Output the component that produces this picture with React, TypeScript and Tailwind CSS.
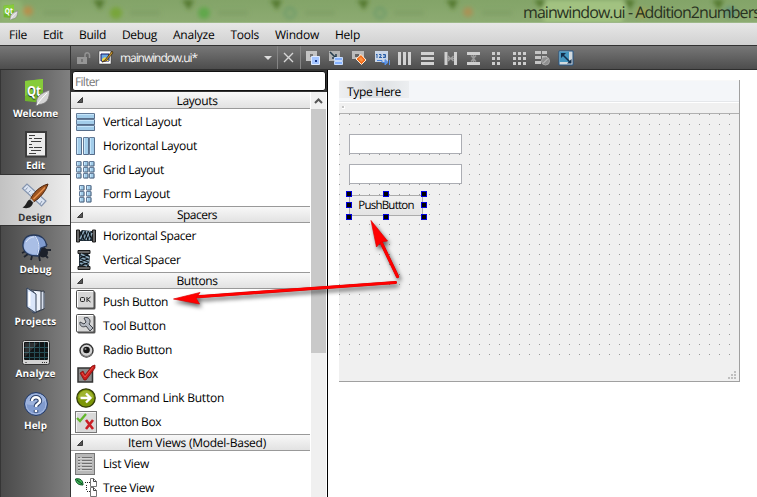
import { useLayoutEffect, useRef, type ReactNode } from "react";

/* Text run whose tracking is adjusted so that it occupies a given width. */
function T({ w, children, className = "" }: { w: number; children: string; className?: string }) {
  const ref = useRef<HTMLSpanElement>(null);
  useLayoutEffect(() => {
    const el = ref.current;
    if (!el) return;
    el.style.letterSpacing = "0px";
    const natural = el.getBoundingClientRect().width;
    el.style.letterSpacing = `${(w - natural) / children.length}px`;
  }, [w, children]);
  return (
    <span ref={ref} className={`inline-block shrink-0 whitespace-pre [text-rendering:geometricPrecision] ${className}`}>
      {children}
    </span>
  );
}

function Svg({ size = 20, box = 20, children, className = "" }: { size?: number; box?: number; children: ReactNode; className?: string }) {
  return (
    <svg width={size} height={size} viewBox={`0 0 ${box} ${box}`} className={`shrink-0 ${className}`}>
      {children}
    </svg>
  );
}

function QtLogo({ size }: { size: number }) {
  return (
    <Svg size={size} box={28}>
      <path d="M3 3 21 1V25L3 23Z" fill="#6fb52c" />
      <path d="M3 3 21 1V12C14 12 8 15 3 18Z" fill="#86cc3a" />
      <text x="5" y="18" fontSize="15" fontWeight="700" fill="#fff" textLength="14" lengthAdjust="spacingAndGlyphs" fontFamily="Open Sans, sans-serif">Qt</text>
      <path d="M27.500 12C20 15 14 18 14.500 25L14 28 17 26.500C25 26 27.500 21 27.500 12Z" fill="#d5d5d5" stroke="#777" strokeWidth=".8" />
      <path d="M15 27C18 22 21 19 25 15" fill="none" stroke="#fff" />
    </Svg>
  );
}

function Sheet() {
  return (
    <Svg size={28} box={28}>
      <path d="M3 1H25V27.500H3Z" fill="#3b3b3b" />
      <path d="M5 3H23V25.500H5Z" fill="#ececec" />
      <path d="M7 5.500h6M7 8.500h3M12 8.500h8M9 11.500h10M7 14.500h3M7 17.500h4M12 17.500h8M9 20.500h10M7 23.500h7" stroke="#3f3f3f" />
    </Svg>
  );
}

function Brush() {
  return (
    <Svg size={28} box={28}>
      <path d="M1.500 6.500 6 2 25 19 20.500 24Z" fill="#dbe4f2" stroke="#8494ae" strokeWidth="1.200" />
      <path d="M6.500 5.500 4.500 8M9.500 8.500 7.500 10.500M12.500 11l-2 2M18 16l-2 2M21 19l-2 3" stroke="#8897b0" />
      <path d="M27 2C19 4 12 11 9.500 17L12.500 20C19 16 25 9 27 2Z" fill="#9c5320" stroke="#4c230b" />
      <path d="M24 5.500 12.500 17" stroke="#e8924e" strokeWidth="1.500" />
      <path d="M9.500 16 13 19.500 9 22Z" fill="#c8c8c8" />
      <path d="M9 17.500C5 18.500 6 23.500 1.500 25.500C6 27 11 26 12 20.500Z" fill="#202020" />
    </Svg>
  );
}

function Bug() {
  return (
    <Svg size={30} box={30} className="-my-px">
      <path d="M5 18 1 20M7 21 3 24M11 23 10 27M18 23 19 28M22 20l5 5M25 17h5M22 15l4-4" stroke="#20252f" strokeWidth="1.800" />
      <circle cx="22" cy="19.500" r="5" fill="#1b202a" />
      <path d="M2 14C1 6 6 2 13 2C20 2 25 6 25.500 13L20 15 17 23C9 23 3 20 2 14Z" fill="#7f9bcf" stroke="#26395b" strokeWidth="1.300" />
      <path d="M3 14C3 6 8 3 13 3 18 8 18 15 15.500 21.500 9 21.500 4 19 3 14Z" fill="#a9bee5" />
      <path d="M14 3C18 8 19 14 16.500 22M5 9C8 5 11 4 13 4" fill="none" stroke="#dfe9fc" />
    </Svg>
  );
}

function Folders() {
  return (
    <Svg size={28} box={28}>
      <path d="M12 6 22 5V23L12 27Z" fill="#d7deeb" stroke="#303947" />
      <path d="M9 4 19 5V24L11 27Z" fill="#edf2fa" stroke="#303947" />
      <path d="M22 7V22" stroke="#8b97a9" />
      <path d="M5 2 12 6V27L5 21Z" fill="#fff" stroke="#45536a" />
      <path d="M5 2 14 8V27L5 21Z" fill="#dae6fa" stroke="#344258" />
      <path d="M7.500 6V20" stroke="#fff" strokeWidth="2" />
    </Svg>
  );
}

function Scope() {
  return (
    <Svg size={28} box={28}>
      <rect x=".5" y="2.500" width="27" height="24" rx="2" fill="#d3d3d3" stroke="#333" />
      <rect x="2" y="4" width="24" height="18" rx="1" fill="#101416" />
      <path d="M7.500 4v18M12.500 4v18M17.500 4v18M22.500 4v18M2 9.500h24M2 14.500h24M2 19.500h24" stroke="#264d55" />
      <path d="M3 5H16L3 19Z" fill="#fff" opacity=".12" />
      <path d="M20 24.500h1m1 0h1m1 0h1" stroke="#333" /><path d="M3 24.500h2" stroke="#777" />
    </Svg>
  );
}

function HelpBall() {
  return (
    <Svg size={28} box={28}>
      <circle cx="14" cy="14" r="11.500" fill="#7994c8" stroke="#253a63" />
      <circle cx="14" cy="14" r="10" fill="#809bcf" stroke="#a8bbe2" />
      <path d="M4 14C10 16 18 15 24 10C22 2 7 1 4 14Z" fill="#9db3dd" />
      <path d="M10 11C10 6 18 6 18 11C18 14 14 13 14 17M14 20v2.500" fill="none" stroke="#2b4069" strokeWidth="4.500" />
      <path d="M10 11C10 6 18 6 18 11C18 14 14 13 14 17M14 20v2" fill="none" stroke="#fff" strokeWidth="2.500" />
    </Svg>
  );
}

const modes = [
  { label: "Welcome", w: 45, icon: <QtLogo size={28} /> },
  { label: "Edit", w: 19, icon: <Sheet /> },
  { label: "Design", w: 34, icon: <Brush />, active: true },
  { label: "Debug", w: 32, icon: <Bug /> },
  { label: "Projects", w: 42, icon: <Folders /> },
  { label: "Analyze", w: 40, icon: <Scope /> },
  { label: "Help", w: 23, icon: <HelpBall /> },
];

const Bar = ({ x, y, w, h }: { x: number; y: number; w: number; h: number }) => (
  <g>
    <rect x={x} y={y} width={w} height={h} rx="1" fill="#647c99" />
    <rect x={x + 1} y={y + 1} width={w - 2} height={h - 2} fill="#a3cdea" />
    <path d={w > h ? `M${x + 1} ${y + 1.5}h${w - 2}` : `M${x + 1.5} ${y + 1}v${h - 2}`} stroke="#c6e6fb" />
    <path d={`M${x + 1} ${y + h - 0.5}H${x + w - 0.5}V${y + 1}`} fill="none" stroke="#4f6480" opacity=".6" />
  </g>
);

const VLayout = <Svg>{[1, 7, 13].map((y) => <Bar key={y} x={0} y={y} w={19} h={6} />)}</Svg>;
const HLayout = <Svg>{[0, 7, 13].map((x) => <Bar key={x} x={x} y={1} w={6} h={18} />)}</Svg>;
const GLayout = <Svg>{[0, 7, 13].flatMap((x) => [1, 7, 13].map((y) => <Bar key={`${x}-${y}`} x={x} y={y} w={5.500} h={5.500} />))}</Svg>;
const FLayout = <Svg>{[3, 10].flatMap((x) => [1, 7, 13].map((y) => <Bar key={`${x}-${y}`} x={x} y={y} w={5.500} h={5.500} />))}</Svg>;

const Spring = (
  <>
    <path d="M.5 4h3v12H.5zM16.500 4h3v12h-3z" fill="#666" stroke="#1c1c1c" />
    <path d="M4 6 6 4 16 5V15L4 15Z" fill="#1d2b36" />
    <path d="M4 13 8 5M7 14 11 5M10 14 14 5M13 14 16 7" stroke="#8da9bc" strokeWidth="1.500" />
    <path d="M5 6 8 14M9 6 12 14M13 6 15 12" stroke="#05090c" />
  </>
);
const HSpacer = <Svg>{Spring}</Svg>;
const VSpacer = <Svg className="-ml-[2px] mr-[2px] rotate-90">{Spring}</Svg>;

const Plate = (
  <>
    <rect x="1.500" y="1.500" width="18" height="18" rx="1.500" fill="#555" />
    <rect x=".5" y=".5" width="17.500" height="17.500" rx="1" fill="#d6d6d6" stroke="#4c4c4c" />
    <path d="M1.500 17V1.500H17" fill="none" stroke="#fff" />
  </>
);
const Push = (
  <Svg className="mb-1">
    {Plate}
    <rect x="4.500" y="7.500" width="4" height="4" rx="1" fill="none" stroke="#222" />
    <path d="M11 7v5M14.500 7 11.500 9.500 14.500 12" stroke="#222" fill="none" />
  </Svg>
);
const Tool = (
  <Svg className="mb-1">
    {Plate}
    <path d="M8 4C12 2 16 6 13 10L17 14 14 17 10 12C7 14 3 12 4 8L8 10 10 8Z" fill="#b4b9c1" stroke="#3f4349" />
  </Svg>
);
const Radio = (
  <Svg>
    <circle cx="10.500" cy="10.500" r="6.500" fill="#d2d2d2" stroke="#333" strokeWidth="1.400" />
    <path d="M5 13a6 6 0 0 0 11 0" fill="none" stroke="#777" strokeWidth="1.500" />
    <circle cx="10.500" cy="10" r="3.300" fill="#151515" />
    <circle cx="9.500" cy="9" r="1" fill="#888" />
  </Svg>
);
const Check = (
  <Svg>
    <rect x="2" y="4" width="14.500" height="14" fill="#8c8c8c" stroke="#333" strokeWidth="1.500" />
    <path d="M4 9 7 7 9 11 16 2 19 1 19 4 10 16 8 16Z" fill="#cb1c1a" stroke="#7b0907" strokeWidth=".7" />
    <path d="M6 9 9 13 17 3" fill="none" stroke="#e4534b" />
  </Svg>
);
const Link = (
  <Svg>
    <circle cx="10" cy="10" r="9.200" fill="#7d9707" stroke="#333d09" strokeWidth="1.300" />
    <path d="M2.500 10A7.500 7.500 0 0 1 17.500 10Z" fill="#a0b530" />
    <path d="M4.500 10h9M10 5.500 14.500 10 10 14.500" fill="none" stroke="#fff" strokeWidth="2.300" />
  </Svg>
);
const Box = (
  <Svg size={22} box={22} className="-ml-px -mr-px">
    <rect x=".5" y=".5" width="21" height="21" fill="#d9d9d9" stroke="#777" />
    <path d="M1.500 21V1.500H21" fill="none" stroke="#f5f5f5" />
    <path d="M2 7 5 10 11 3" fill="none" stroke="#62b62b" strokeWidth="2.300" />
    <path d="M11 9 18 18M18 9 11 18" stroke="#c91f25" strokeWidth="2.600" />
  </Svg>
);
const List = (
  <Svg size={22} box={22} className="-ml-px -mr-px">
    <rect x=".5" y=".5" width="19" height="21" fill="#b8b8b8" stroke="#777" />
    <path d="M3 4.500h2M3 7.500h2M3 10.500h2M3 13.500h2M3 16.500h2M7 4.500h10M7 7.500h10M7 10.500h10M7 13.500h10M7 16.500h10" stroke="#707070" />
    <path d="M3 5.500h14M3 8.500h14M3 11.500h14M3 14.500h14M3 17.500h14" stroke="#d4d4d4" />
  </Svg>
);
const Tree = (
  <Svg size={22} box={22} className="-ml-px -mr-px">
    <path d="M.5 2C5 1 8 3 8 8C3 8 1 6 .5 2Z" fill="#43b35b" stroke="#074e20" />
    <path d="M2 3 7 7" stroke="#064718" />
    <path d="M10 5.500h6M11.500 8v6M12 14.500h4" stroke="#222" strokeDasharray="1 1" />
    <path d="M15.500 1.500h3l3 3v5h-6zM15.500 10.500h3l3 3v6h-6z" fill="#fff" stroke="#777" />
    <path d="M18.500 1.500v3h3M18.500 10.500v3h3" fill="none" stroke="#444" />
  </Svg>
);

type Row = { label: string; w: number; icon: ReactNode };
const groups: { title: string; w: number; rows: Row[] }[] = [
  {
    title: "Layouts", w: 41, rows: [
      { label: "Vertical Layout", w: 78.5, icon: VLayout },
      { label: "Horizontal Layout", w: 94, icon: HLayout },
      { label: "Grid Layout", w: 61, icon: GLayout },
      { label: "Form Layout", w: 67, icon: FLayout },
    ],
  },
  {
    title: "Spacers", w: 40, rows: [
      { label: "Horizontal Spacer", w: 93, icon: HSpacer },
      { label: "Vertical Spacer", w: 77.5, icon: VSpacer },
    ],
  },
  {
    title: "Buttons", w: 41, rows: [
      { label: "Push Button", w: 65, icon: Push },
      { label: "Tool Button", w: 63, icon: Tool },
      { label: "Radio Button", w: 69, icon: Radio },
      { label: "Check Box", w: 55, icon: Check },
      { label: "Command Link Button", w: 121, icon: Link },
      { label: "Button Box", w: 58, icon: Box },
    ],
  },
  {
    title: "Item Views (Model-Based)", w: 138, rows: [
      { label: "List View", w: 46, icon: List },
      { label: "Tree View", w: 51, icon: Tree },
    ],
  },
];

const menus: [string, number][] = [
  ["File", 18], ["Edit", 20], ["Build", 27], ["Debug", 35], ["Analyze", 41.5], ["Tools", 28.5], ["Window", 44], ["Help", 25],
];

const tools: ReactNode[] = [
  <>
    <path d="M1 1h11v10H1z" fill="#c4c4c4" /><path d="M5 4h3v3H5z" fill="#777" />
    <path d="M6.500 6.500h8v8h-8z" fill="#a4c5ff" stroke="#dfeaff" /><path d="M10 10h2v2h-2z" fill="#1a3b90" />
  </>,
  <>
    <path d="M1 1h11v10H1z" fill="#b4b4b4" /><path d="M2 2 8 8M8 4v4H4" stroke="#263d4d" strokeWidth="1.500" fill="none" />
    <path d="M6.500 7.500h8v3h-8zM6.500 11.500h8v3h-8z" fill="#86b2ff" stroke="#c8dcfc" />
  </>,
  <>
    <path d="M1 1h12v8H1z" fill="#bcbcbc" /><path d="M4 4h4v3H4z" fill="#666" />
    <path d="M5 9 10 4.500 15 10 10.500 14.500Z" fill="#f36b18" stroke="#fff0dc" /><path d="M7.500 9 10 7 12.500 10 10.500 12Z" fill="#ff9140" />
  </>,
  <>
    <path d="M1 1h13v11H1z" fill="#c9d6e8" />
    <path d="M3 4v4M2 5l1-1M5 4.500h2v1.500L5 7.500h3M9 4.500h2.500v3H9M9.500 6h2" stroke="#275da8" fill="none" />
    <path d="M3 10.500h5v2h3" fill="none" stroke="#4a84dc" /><path d="M11 9.500v5.500l3-2.750zM15.500 10v5" fill="#5b92e6" stroke="#5b92e6" />
  </>,
  <path d="M1 2h3v13H1zM6 2h3v13H6zM11 2h3v13h-3z" fill="#d2d2d2" />,
  <path d="M1 2h13v3H1zM1 7h13v3H1zM1 12h13v3H1z" fill="#d2d2d2" />,
  <>
    <path d="M1.500 2h3v13h-3zM11 2h3v13h-3z" fill="#cfcfcf" /><path d="M4 8.500h7M5 6l2.500 2.500L5 11M10.500 6 8 8.500l2.500 2.500" stroke="#a2a2a2" fill="none" strokeWidth="1.400" />
  </>,
  <>
    <path d="M1 2h13v3H1zM1 12h13v3H1z" fill="#cfcfcf" /><path d="M7.500 5v7M5 5.500l2.500 3 2.500-3M5 11.500l2.500-3 2.500 3" stroke="#999" fill="none" strokeWidth="1.400" />
  </>,
  <path d="M3 2h3v3H3zM8 2h3v3H8zM3 7h3v3H3zM8 7h3v3H8zM3 12h3v3H3zM8 12h3v3H8z" fill="#cdcdcd" />,
  <path d="M1 2h3v3H1zM6 2h3v3H6zM11 2h3v3h-3zM1 7h3v3H1zM6 7h3v3H6zM11 7h3v3h-3zM1 12h3v3H1zM6 12h3v3H6zM11 12h3v3h-3z" fill="#cdcdcd" />,
  <>
    <path d="M0 1h6v3H0zM7 1h5v3H7zM0 6h6v3H0zM7 6h5v3H7zM0 11h6v3H0z" fill="#c4c4c4" />
    <circle cx="10.500" cy="11" r="4" fill="#8e8e8e" stroke="#a5a5a5" /><path d="M8 13.500 13 8.500" stroke="#ccc" />
  </>,
  <>
    <path d="M1 1h14v14H1z" fill="#d3dade" stroke="#245687" /><path d="M1.500 1.500H11V12H1.500z" fill="#4596c0" />
    <path d="M4 4 12.500 12.500" stroke="#132e4c" strokeWidth="1.500" /><path d="M3 3h5L3 8zM13.500 13.500H9l4.500-4.500z" fill="#132e4c" />
  </>,
];

function ModeBar() {
  return (
    <nav className="flex w-[70px] shrink-0 flex-col border-l border-[#353535] bg-linear-to-r from-[#4a4a4a] to-[#808080] font-bold">
      {modes.map((m) => (
        <div
          key={m.label}
          className={`flex h-[52px] shrink-0 flex-col items-center ${m.active ? "-ml-px border-y border-[#333] bg-linear-to-r from-[#c2c2c2] to-[#ededed] pt-[7px] text-[#333]" : "pt-2 text-white [text-shadow:0_1px_1px_#222]"}`}
        >
          {m.icon}
          <T w={m.w} className="text-[10px] leading-[14px]">{m.label}</T>
        </div>
      ))}
    </nav>
  );
}

function WidgetBox() {
  return (
    <aside className="flex w-[257px] shrink-0 flex-col overflow-hidden border-r border-black bg-white">
      <div className="h-[22px] shrink-0 bg-[#333] px-px pt-px">
        <div className="flex h-5 items-center rounded-[3px] border border-[#111] bg-white pt-px pl-[2px] text-xs text-[#777]">
          <T w={24}>Filter</T>
        </div>
      </div>
      <div className="flex min-h-0 grow">
        <div className="w-[239px] shrink-0 overflow-hidden">
          {groups.map((g, i) => (
            <section key={g.title}>
              <div className={`flex h-[17px] items-center border-b border-[#999] bg-linear-to-b from-[#f8f8f8] to-[#e2e2e2] ${i ? "border-t" : ""}`}>
                <svg width="6" height="6" viewBox="0 0 6 6" className="ml-1.5 shrink-0"><path d="M5.500.5v5h-5z" fill="#555" stroke="#222" strokeWidth=".8" /></svg>
                <div className="flex grow justify-center pl-px"><T w={g.w} className="leading-[15px]">{g.title}</T></div>
              </div>
              <div className="h-px" />
              {g.rows.map((r) => (
                <div key={r.label} className="flex h-6 items-center gap-[7px] pl-[5px]">
                  {r.icon}
                  <T w={r.w} className="leading-4">{r.label}</T>
                </div>
              ))}
            </section>
          ))}
        </div>
        <div className="ml-px flex w-[15px] flex-col bg-[#f0f0f0]">
          <svg width="15" height="17" viewBox="0 0 15 17"><path d="M4 11 7.500 7.500 11 11" fill="none" stroke="#555" strokeWidth="2" /></svg>
          <div className="h-[244px] bg-[#c9c9c9]" />
        </div>
      </div>
    </aside>
  );
}

const handles = [
  "left-[-4px] top-[-5px]", "left-[33px] top-[-5px]", "left-[71px] top-[-5px]",
  "left-[-4px] top-[6px]", "left-[71px] top-[6px]",
  "left-[-4px] top-[18px]", "left-[33px] top-[18px]", "left-[71px] top-[18px]",
];

function Form() {
  return (
    <div className="mt-[10px] ml-[11px] flex h-[302px] w-[401px] flex-col border-r border-b border-[#a0a0a0] bg-[#f0f0f0]">
      <div className="h-px shrink-0 bg-[#f8f8f8]" />
      <div className="h-[21px] shrink-0 border-b border-[#e5e7ea] bg-[#f4f6f9]">
        <div className="flex h-[17px] w-[70px] items-center bg-linear-to-r from-[#eeeff1] via-[#dcdfe2] to-[#eceef0] pl-2">
          <T w={54} className="mt-[5px]">Type Here</T>
        </div>
      </div>
      <div className="h-3 shrink-0 border-t border-b border-t-white border-b-[#b0b0b0] pt-[3px] pl-[3px]">
        <div className="size-[3px] border-r border-b border-white bg-[#c4c4c4]" />
      </div>
      <div className="flex h-[241px] w-[391px] shrink-0 flex-col items-start bg-[radial-gradient(circle_at_0.5px_0.5px,#999_0.7px,transparent_0.71px)] bg-size-[10px_10px] pt-5 pl-[10px]">
        <div className="h-5 w-[113px] border border-[#abadb3] bg-white" />
        <div className="mt-[10px] h-5 w-[113px] border border-[#abadb3] bg-white" />
        <div className="relative mt-[11px] flex h-[21px] w-[74px] items-center justify-center border border-[#acacac] bg-linear-to-b from-[#f0f0f0] to-[#e4e4e4]">
          <T w={55.5} className="text-[11.500px]">PushButton</T>
          {handles.map((h) => <i key={h} className={`absolute size-1.5 border border-[#0000e0] bg-black ${h}`} />)}
        </div>
      </div>
      <svg width="8" height="8" viewBox="0 0 8 8" className="mt-[16px] ml-auto mr-[3px] shrink-0">
        <path d="M6 0h2v2H6zM3 3h2v2H3zM6 3h2v2H6zM0 6h2v2H0zM3 6h2v2H3zM6 6h2v2H6z" fill="#bfbfbf" />
      </svg>
    </div>
  );
}

export default function App() {
  return (
    <div className="relative flex h-[497px] w-[757px] flex-col overflow-hidden bg-white font-['Open_Sans','Noto_Sans',sans-serif] text-xs text-black">
      <header className="relative flex h-[23px] shrink-0 items-center overflow-hidden bg-linear-to-b from-[#83a468] to-[#8dab72] pl-[2px]">
        <svg width="757" height="23" className="absolute inset-0">
          <defs><filter id="soft"><feGaussianBlur stdDeviation="2.200" /></filter></defs>
          <g filter="url(#soft)">
            <path d="M0 0H20L30 23H0Z" fill="#90b272" />
            <path d="M535 0H628L622 23H545Z" fill="#a2c281" />
            <path d="M93 0h12l-5 10zM182 0h12l-5 10zM270 0h12l-5 10zM357 0h12l-5 10zM446 0h12l-5 10zM534 0h12l-5 10zM623 0h12l-5 10zM712 0h12l-5 10z" fill="#53782f" />
            <circle cx="28" cy="11" r="5" fill="#b5914d" /><circle cx="116" cy="13" r="6" fill="#78a53a" />
            <circle cx="204" cy="13" r="6" fill="#60a74c" /><circle cx="290" cy="13" r="5" fill="none" stroke="#65976a" strokeWidth="2" />
            <circle cx="380" cy="13" r="5" fill="none" stroke="#65976a" strokeWidth="2" /><circle cx="468" cy="12" r="5" fill="#a99357" />
            <circle cx="642" cy="13" r="5" fill="#a6a14d" /><circle cx="730" cy="12" r="6" fill="#679578" />
            <path d="M43 13h28M130 13h30M218 13h30M305 13h30M394 13h30M482 13h30" stroke="#748f59" strokeWidth="5" opacity=".35" />
          </g>
          <path d="M0 22.500h757" stroke="#9db888" />
        </svg>
        <div className="relative"><QtLogo size={16} /></div>
        <T w={237} className="relative mt-px ml-[505px] text-[16px] leading-[20px] text-[#293221]">mainwindow.ui - Addition2numbers</T>
      </header>
      <div className="flex h-[23px] shrink-0 items-center gap-4 border-b border-[#333] bg-linear-to-b from-[#e7e7e7] to-[#d1d1d1] pt-px pl-[9px]">
        {menus.map(([label, w]) => <T key={label} w={w}>{label}</T>)}
      </div>
      <div className="flex h-6 shrink-0 items-center border-b border-[#2e2e2e] bg-linear-to-b from-[#777] via-[#626262] to-[#4d4d4d]">
        <div className="h-full w-[71px] shrink-0 border-r border-[#333]" />
        <Svg size={14} box={14} className="ml-1.5">
          <path d="M0 6h10v7H0z" fill="#969696" /><path d="M8 6V4a2 2 0 0 1 4.500 0v3" fill="none" stroke="#929292" strokeWidth="1.500" /><path d="M4.500 8h1v3h-1z" fill="#555" />
        </Svg>
        <Svg size={16} box={16} className="ml-[7px]">
          <path d="M1 1h12v13H1z" fill="#fff" stroke="#333" strokeWidth=".5" /><path d="M3 4h8v7H3z" fill="#6aa7e2" stroke="#151560" />
          <path d="M4 9l3-2 4 4H4z" fill="#f2d849" /><path d="M4 12 7 10 14 1 15 3 8 11Z" fill="#c0912d" stroke="#372306" strokeWidth=".7" />
        </Svg>
        <T w={77} className="mt-px ml-[6px] text-[#f4f4f4]">mainwindow.ui*</T>
        <svg width="8" height="4" viewBox="0 0 8 4" className="ml-[67px] shrink-0"><path d="M0 0h8L4 4z" fill="#ddd" /></svg>
        <div className="ml-[5px] h-full w-px bg-[#858585]" />
        <svg width="11" height="11" viewBox="0 0 11 11" className="ml-[5px] shrink-0"><path d="M1 1 10 10M10 1 1 10" stroke="#d6d6d6" strokeWidth="1.400" /></svg>
        <div className="ml-[6px] h-full w-px bg-[#858585]" />
        <div className="ml-1 flex gap-[7px]">
          {tools.map((t, i) => <Svg key={i} size={16} box={16}>{t}</Svg>)}
        </div>
      </div>
      <div className="flex min-h-0 grow">
        <ModeBar />
        <div className="w-px shrink-0 bg-[#333]" />
        <WidgetBox />
        <main className="grow bg-white"><Form /></main>
      </div>
      <svg width="757" height="497" viewBox="0 0 757 497" className="pointer-events-none absolute inset-0 [filter:drop-shadow(2px_3px_2px_rgba(0,0,0,0.6))]">
        <path d="M395.500 282.500 194 297M397.500 276.500 380 240" stroke="#d00000" strokeWidth="3.200" strokeLinecap="round" />
        <path d="M395.500 282.500 194 297M397.500 276.500 380 240" stroke="#f00" strokeWidth="2.500" strokeLinecap="round" />
        <path d="M173.500 299 200 292.500 196 298 199.500 304ZM371 220.500 387.500 241 381 242 376.500 247Z" fill="#f00" stroke="#e00000" strokeWidth=".7" />
      </svg>
    </div>
  );
}
